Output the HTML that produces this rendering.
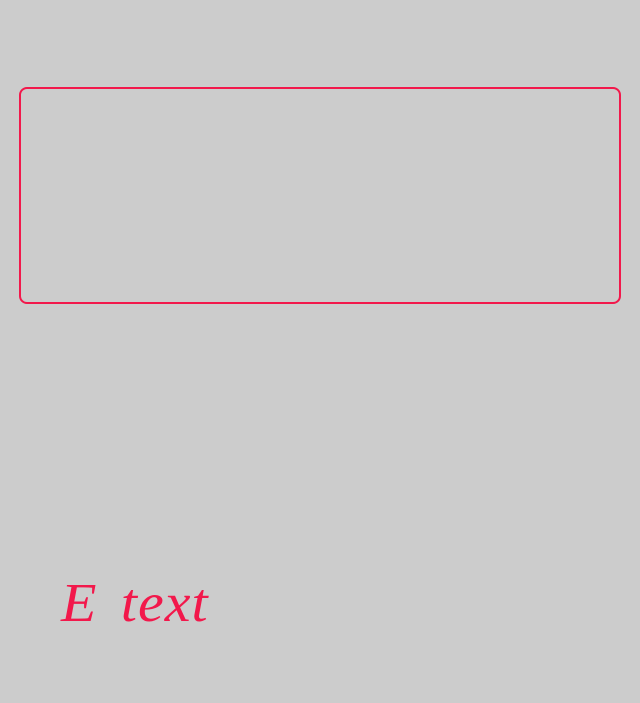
<!DOCTYPE html>
<html><head><style>
html,body{margin:0;padding:0;background:#cccccc;width:640px;height:703px;overflow:hidden;position:relative}
.box{position:absolute;left:19px;top:87px;width:598px;height:213px;border:2px solid #f2184b;border-radius:8px}
.t{position:absolute;left:61px;top:563px;font-family:"Liberation Serif",serif;font-style:italic;font-size:58px;color:#f2184b;line-height:80px;letter-spacing:1px;word-spacing:8px;white-space:nowrap;transform:scaleY(0.95)}
</style></head><body>
<div class="box"></div>
<div class="t">E text</div>
</body></html>
